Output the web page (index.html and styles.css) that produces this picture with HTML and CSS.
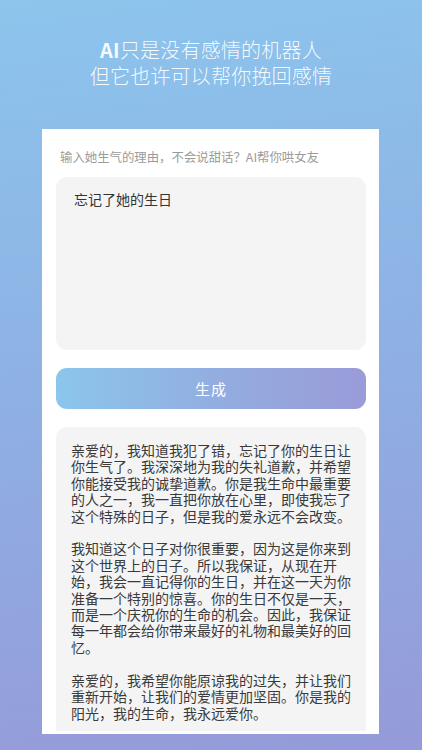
FILE: index.html
```html
<!DOCTYPE html>
<html lang="zh-CN">
<head>
<meta charset="utf-8">
<meta name="viewport" content="width=device-width, initial-scale=1">
<title>AI哄女友</title>
<link rel="stylesheet" href="styles.css">
</head>
<body>
<div class="page">
  <header class="headline">
    <div class="headline-line"><span class="ai">AI</span><span>只是没有感情的机器人</span></div>
    <div class="headline-line"><span>但它也许可以帮你挽回感情</span></div>
  </header>
  <main class="card">
    <div class="hint">输入她生气的理由，不会说甜话？AI帮你哄女友</div>
    <div class="input-box">忘记了她的生日</div>
    <button class="generate" type="button">生成</button>
    <div class="result">亲爱的，我知道我犯了错，忘记了你的生日让你生气了。我深深地为我的失礼道歉，并希望你能接受我的诚挚道歉。你是我生命中最重要的人之一，我一直把你放在心里，即使我忘了这个特殊的日子，但是我的爱永远不会改变。

我知道这个日子对你很重要，因为这是你来到这个世界上的日子。所以我保证，从现在开始，我会一直记得你的生日，并在这一天为你准备一个特别的惊喜。你的生日不仅是一天，而是一个庆祝你的生命的机会。因此，我保证每一年都会给你带来最好的礼物和最美好的回忆。

亲爱的，我希望你能原谅我的过失，并让我们重新开始，让我们的爱情更加坚固。你是我的阳光，我的生命，我永远爱你。</div>
  </main>
</div>
</body>
</html>
```

FILE: styles.css
```css
html, body {
  margin: 0;
  padding: 0;
}

body {
  width: 422px;
  height: 750px;
  overflow: hidden;
  font-family: "Noto Sans CJK SC", "Noto Sans", sans-serif;
  background: linear-gradient(172deg, #8cc5ed 0%, #8eb2e4 45%, #959ad9 100%);
}

.page {
  display: flex;
  flex-direction: column;
  height: 750px;
}

.headline {
  padding-top: 37px;
  color: rgba(255, 255, 255, 0.92);
  font-size: 20px;
  line-height: 26px;
  font-weight: 300;
  letter-spacing: 0.2px;
}

.headline-line {
  display: flex;
  justify-content: center;
  height: 26px;
}

.headline .ai {
  font-weight: 700;
}

.card {
  box-sizing: border-box;
  width: 337px;
  height: 605px;
  margin: 40px 0 0 42px;
  padding: 19px 13px 0 14px;
  background: #ffffff;
  border-bottom: 3px solid #ffffff;
  overflow: hidden;
  display: flex;
  flex-direction: column;
}

.hint {
  padding-left: 4px;
  font-size: 12.4px;
  line-height: 18px;
  color: #9b9b9b;
  white-space: nowrap;
}

.input-box {
  box-sizing: border-box;
  height: 173px;
  margin-top: 11px;
  padding: 12px 18px;
  border-radius: 11px;
  background: #f4f4f5;
  font-size: 14px;
  line-height: 20px;
  color: #333333;
  flex-shrink: 0;
}

.generate {
  display: block;
  width: 100%;
  height: 41px;
  margin-top: 18px;
  border: 0;
  border-radius: 11px;
  background: linear-gradient(90deg, #8bc6ec 0%, #93ace0 55%, #9a9bd8 100%);
  color: #ffffff;
  font-family: inherit;
  font-size: 15px;
  letter-spacing: 1px;
  flex-shrink: 0;
  padding: 0;
}

.result {
  margin-top: 18px;
  padding: 15px 14px 20px 15px;
  border-radius: 11px;
  background: #f4f4f5;
  font-size: 14px;
  line-height: 16.4px;
  color: #3a3a3a;
  white-space: pre-wrap;
  flex-shrink: 0;
}
```
